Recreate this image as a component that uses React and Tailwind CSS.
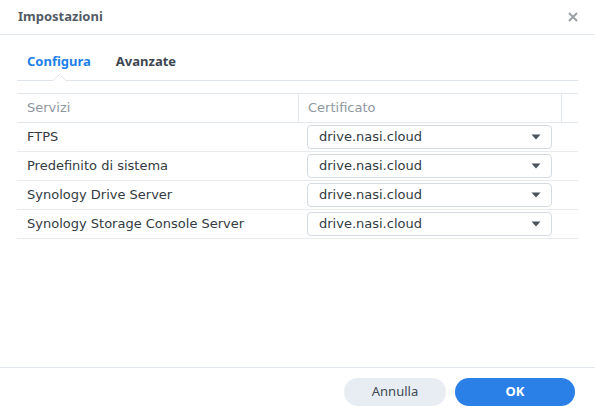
import React from 'react';

const rows = [
  'FTPS',
  'Predefinito di sistema',
  'Synology Drive Server',
  'Synology Storage Console Server',
];

function CertSelect({ value }) {
  return (
    <div className="flex h-[24px] w-[245px] items-center justify-between rounded-[4px] border border-[#d5dbe2] bg-white pl-[11px] pr-[10px]">
      <span className="text-[13px] text-[#333a42]">{value}</span>
      <svg width="10" height="6" viewBox="0 0 10 6">
        <path d="M0.5 0.5h9L5 5.5z" fill="#4a525b" />
      </svg>
    </div>
  );
}

export default function App() {
  return (
    <div
      className="flex h-[415px] w-[595px] flex-col bg-white"
      style={{ fontFamily: '"DejaVu Sans", Verdana, sans-serif' }}
    >
      {/* header */}
      <div className="flex h-[35px] shrink-0 items-center justify-between border-b border-[#e3e8ee] pl-[18px] pr-[17px]">
        <span
          className="text-[13px] font-bold text-[#525b65]"
          style={{ fontFamily: '"Noto Sans", sans-serif' }}
        >
          Impostazioni
        </span>
        <svg width="10" height="10" viewBox="0 0 10 10">
          <path d="M1 1l8 8M9 1l-8 8" stroke="#9aa1a8" strokeWidth="2" />
        </svg>
      </div>

      <div className="flex flex-1 flex-col px-[17px]">
        {/* tabs */}
        <div className="relative flex h-[46px] items-center gap-[25px] border-b border-[#dfe4ea] pl-[10px] pt-[8px]">
          <span
            className="text-[13px] font-bold text-[#1e7fe8]"
            style={{ fontFamily: '"Noto Sans", sans-serif' }}
          >
            Configura
          </span>
          <span
            className="text-[13px] font-bold text-[#3d4650]"
            style={{ fontFamily: '"Noto Sans", sans-serif' }}
          >
            Avanzate
          </span>
          <svg className="absolute bottom-[-1px] left-[36px]" width="13" height="7" viewBox="0 0 13 7">
            <path d="M0 6.5h13" stroke="#ffffff" strokeWidth="2" />
            <path d="M0 6.5L6.5 0.5L13 6.5" fill="#fff" stroke="#dfe4ea" strokeWidth="1" />
          </svg>
        </div>

        {/* table */}
        <div className="mt-[12px]">
          <div className="flex h-[30px] border-y border-[#e3e8ee] text-[13px] text-[#8e979f]">
            <div className="flex w-[282px] items-center border-r border-[#e3e8ee] pl-[10px]">Servizi</div>
            <div className="flex w-[263px] items-center border-r border-[#e3e8ee] pl-[9px]">Certificato</div>
            <div className="flex-1" />
          </div>
          {rows.map((r) => (
            <div key={r} className="flex h-[29px] items-center border-b border-[#e8ecf0] text-[13px] text-[#333a42]">
              <div className="w-[282px] pl-[10px]">{r}</div>
              <div className="pl-[8px]">
                <CertSelect value="drive.nasi.cloud" />
              </div>
            </div>
          ))}
        </div>
      </div>

      {/* footer */}
      <div className="flex h-[48px] shrink-0 items-center justify-end gap-[9px] border-t border-[#e3e8ee] pr-[20px]">
        <button
          className="h-[28px] w-[102px] rounded-full bg-[#e8edf3] text-[13px] text-[#414a53]"
          style={{ fontFamily: '"Noto Sans", sans-serif' }}
        >
          Annulla
        </button>
        <button
          className="h-[28px] w-[120px] rounded-full bg-[#2a80e6] text-[13px] font-bold text-white"
          style={{ fontFamily: '"Noto Sans", sans-serif' }}
        >
          OK
        </button>
      </div>
    </div>
  );
}
